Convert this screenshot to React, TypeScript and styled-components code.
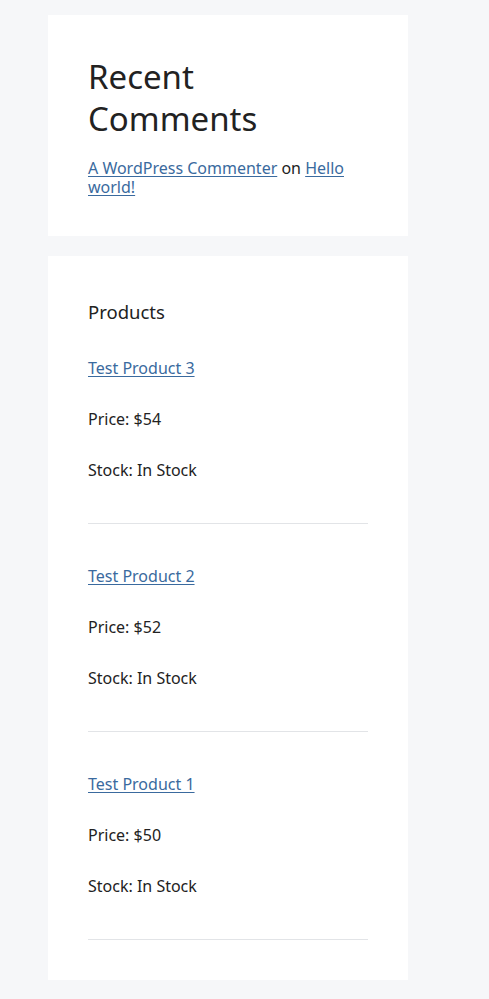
import React from "react";
import styled, { createGlobalStyle } from "styled-components";

const Global = createGlobalStyle`
  html, body { margin: 0; padding: 0; background: #f6f7f9; }
  body { font-family: "Noto Sans", "Open Sans", sans-serif; color: #222; }
`;

const Page = styled.div`
  display: flex;
  flex-direction: column;
  gap: 20px;
  padding: 15px 0 19px 48px;
`;

const Card = styled.section<{ $bottom?: number }>`
  width: 360px;
  box-sizing: border-box;
  background: #fff;
  padding: 40px 40px ${(p) => p.$bottom ?? 40}px;
`;

const BigTitle = styled.h2`
  margin: 1px 0 19px;
  font-size: 33px;
  line-height: 42px;
  font-weight: 400;
  color: #222;
`;

const SmallTitle = styled.h2`
  margin: 4px 0 32px;
  font-size: 18.5px;
  line-height: 24px;
  font-weight: 400;
  color: #222;
`;

const Link = styled.a`
  color: #3a6a9e;
  text-decoration: underline;
  text-underline-offset: 2px;
  text-decoration-thickness: 1px;
`;

const CommentLine = styled.p`
  margin: 0;
  font-size: 16px;
  line-height: 19px;
`;

const Item = styled.div`
  display: flex;
  flex-direction: column;
  gap: 27px;
  padding-bottom: 40px;
  &:last-child { padding-bottom: 0; }
`;

const Line = styled.p`
  margin: 0;
  font-size: 16px;
  line-height: 24px;
`;

const Rule = styled.hr`
  border: 0;
  height: 1px;
  background: #e2e4e7;
  margin: 14px 0 0;
`;

const products = [
  { name: "Test Product 3", price: 54 },
  { name: "Test Product 2", price: 52 },
  { name: "Test Product 1", price: 50 },
];

export default function App() {
  return (
    <>
      <Global />
      <Page>
        <Card $bottom={39}>
          <BigTitle>Recent Comments</BigTitle>
          <CommentLine>
            <Link href="#">A WordPress Commenter</Link> on <Link href="#">Hello world!</Link>
          </CommentLine>
        </Card>
        <Card>
          <SmallTitle>Products</SmallTitle>
          {products.map((p) => (
            <Item key={p.name}>
              <Line>
                <Link href="#">{p.name}</Link>
              </Line>
              <Line>Price: ${p.price}</Line>
              <Line>Stock: In Stock</Line>
              <Rule />
            </Item>
          ))}
        </Card>
      </Page>
    </>
  );
}
